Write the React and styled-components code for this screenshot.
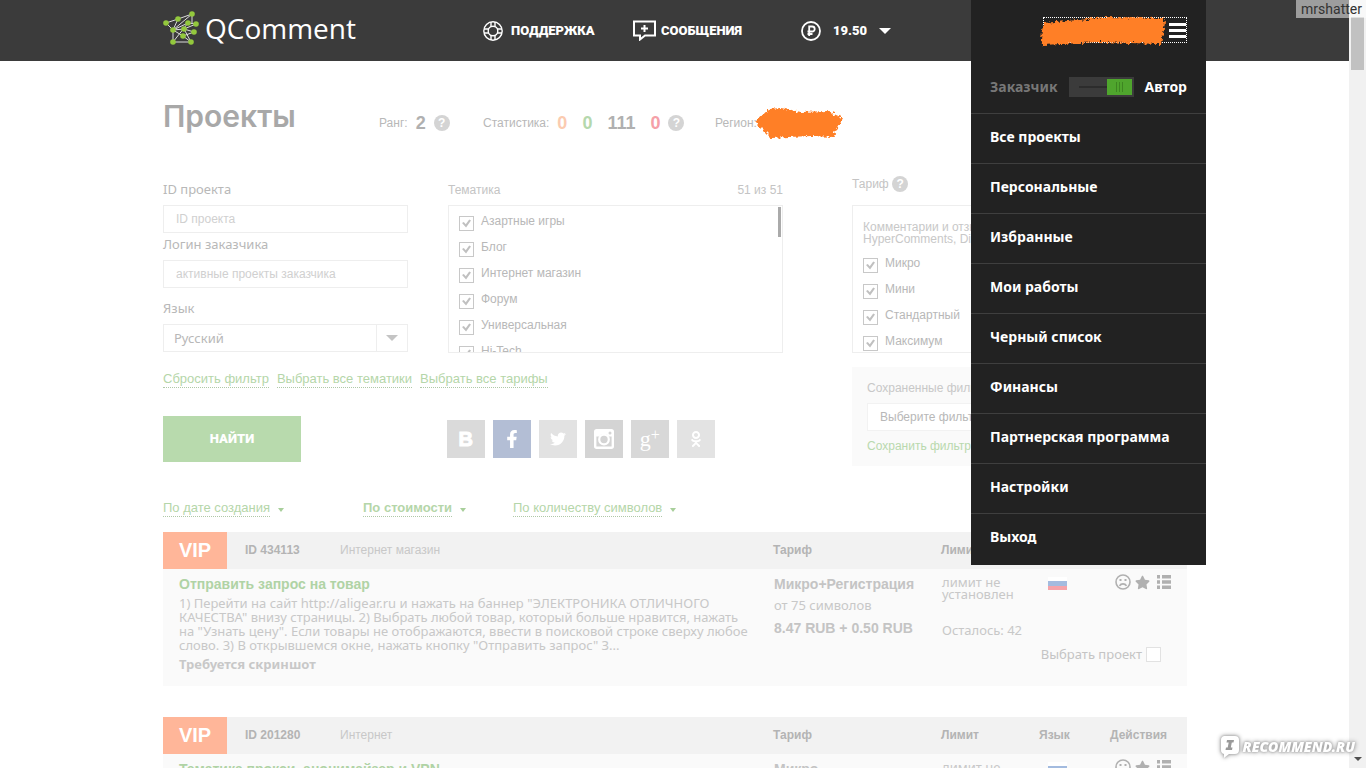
import React from "react";
import styled, { createGlobalStyle } from "styled-components";
import { FaFacebookF, FaTwitter, FaOdnoklassniki, FaStar } from "react-icons/fa";

const THEMES = ["Азартные игры", "Блог", "Интернет магазин", "Форум", "Универсальная", "Hi-Tech"];
const TARIFFS = ["Микро", "Мини", "Стандартный", "Максимум"];

const MENU = [
  "Все проекты",
  "Персональные",
  "Избранные",
  "Мои работы",
  "Черный список",
  "Финансы",
  "Партнерская программа",
  "Настройки",
  "Выход"
];

const PROJECTS = [
  {
    id: "434113",
    category: "Интернет магазин",
    title: "Отправить запрос на товар",
    text:
      '1) Перейти на сайт http://aligear.ru и нажать на баннер "ЭЛЕКТРОНИКА ОТЛИЧНОГО КАЧЕСТВА" внизу страницы. 2) Выбрать любой товар, который больше нравится, нажать на "Узнать цену". Если товары не отображаются, ввести в поисковой строке сверху любое слово. 3) В открывшемся окне, нажать кнопку "Отправить запрос" З...',
    note: "Требуется скриншот",
    tariff: "Микро+Регистрация",
    length: "от 75 символов",
    price: "8.47 RUB + 0.50 RUB",
    left: "Осталось: 42"
  },
  {
    id: "201280",
    category: "Интернет",
    title: "Тематика прокси, анонимайзер и VPN",
    tariff: "Микро"
  }
];

const LogoIcon = () => (
  <svg width="36" height="34" viewBox="0 0 36 34" aria-hidden="true">
    <path
      d="M3 12L15 8L29 3M3 12L10 19L15 8M10 19L29 3V12M10 19L25 12L33 13L21 18L10 19L10 31H28L20 25L31 21L21 18M10 31L25 12M21 18L28 31M10 19L20 25"
      fill="none"
      stroke="#dcdcdc"
      strokeWidth="1"
    />
    <g fill="#93c83d">
      <circle cx="29" cy="3" r="2.800" />
      <circle cx="15" cy="8" r="2.800" />
      <circle cx="3" cy="12" r="2.800" />
      <circle cx="25" cy="12" r="2.800" />
      <circle cx="33" cy="13" r="2.800" />
      <circle cx="21" cy="18" r="2.800" />
      <circle cx="10" cy="19" r="2.800" />
      <circle cx="31" cy="21" r="2.800" />
      <circle cx="20" cy="25" r="2.800" />
      <circle cx="10" cy="31" r="2.800" />
      <circle cx="28" cy="31" r="2.800" />
    </g>
  </svg>
);

const SupportIcon = () => (
  <svg width="20" height="20" viewBox="0 0 20 20" fill="none" stroke="#fff" strokeWidth="1.4" aria-hidden="true">
    <circle cx="10" cy="10" r="9.2" />
    <circle cx="10" cy="10" r="4.8" />
    <path d="M8 1v5M12 1v5M8 14v5M12 14v5M1 8h5M1 12h5M14 8h5M14 12h5" />
  </svg>
);

const MessageIcon = () => (
  <svg width="23" height="21" viewBox="0 0 23 21" fill="none" stroke="#fff" strokeWidth="2" aria-hidden="true">
    <path d="M1 1.5h21v14H12l-5 4v-4H1z" />
    <path d="M11.5 5v7M8 8.500h7" />
  </svg>
);

const RubleIcon = () => (
  <svg width="20" height="20" viewBox="0 0 20 20" fill="none" stroke="#fff" aria-hidden="true">
    <circle cx="10" cy="10" r="9" strokeWidth="1.8" />
    <path d="M8.200 15V5.500h3a2.500 2.500 0 0 1 0 5H6.500M6.500 13h5" strokeWidth="1.8" />
  </svg>
);

const CameraIcon = () => (
  <svg width="20" height="20" viewBox="0 0 20 20" fill="none" stroke="#fff" aria-hidden="true">
    <rect x="1.200" y="1.200" width="17.600" height="17.600" rx="1.500" strokeWidth="2.400" />
    <path d="M1 1h18v6.500h-4.300a5.600 5.600 0 0 0-9.400 0H1z" fill="#fff" stroke="none" />
    <circle cx="10" cy="10.500" r="4.800" strokeWidth="2.200" />
    <circle cx="16" cy="4" r="1.500" fill="#d4d4d4" stroke="none" />
  </svg>
);

const SadIcon = () => (
  <svg width="16" height="16" viewBox="0 0 16 16" fill="none" stroke="#b0b0b0" strokeWidth="1.600" aria-hidden="true">
    <circle cx="8" cy="8" r="7" />
    <path d="M4.500 11.800c1.500-2.600 5.500-2.600 7 0" />
    <path d="M5.500 5v2M10.500 5v2" strokeWidth="2" />
  </svg>
);

const ListIcon = () => (
  <svg width="14" height="14" viewBox="0 0 14 14" fill="#b0b0b0" aria-hidden="true">
    <path d="M0 0h3v3.500H0zM5 0h9v3.500H5zM0 5.200h3v3.500H0zM5 5.200h9v3.500H5zM0 10.500h3v3.500H0zM5 10.500h9v3.500H5z" />
  </svg>
);

const FlagIcon = () => (
  <svg width="19" height="13" viewBox="0 0 19 13" role="img" aria-label="Русский">
    <rect width="19" height="13" fill="#fff" />
    <rect y="4" width="19" height="5" fill="#a3bbdf" />
    <rect y="9" width="19" height="4" fill="#f5a3a9" />
  </svg>
);

const BubbleIcon = () => (
  <svg width="22" height="24" viewBox="0 0 22 24" aria-hidden="true">
    <path d="M5 1h11a4 4 0 0 1 4 4v10a4 4 0 0 1-4 4h-6l-5 4v-4a4 4 0 0 1-3-4V5a4 4 0 0 1 3-4z" fill="#fff" />
    <path d="M8 5h7l-.500 2.500h-1.700l-1 5h1.700l-.5 2.500H6.500L7 12.500h1.700l1-5H7.500z" fill="#999" />
  </svg>
);

const Check = ({ children }) => (
  <CheckRow>
    <Tick type="checkbox" defaultChecked />
    <span>{children}</span>
  </CheckRow>
);

const Project = ({ project }) => (
  <Card>
    <colgroup>
      <Col $w={64} />
      <Col $w={95} />
      <col />
      <Col $w={168} />
      <Col $w={98} />
      <Col $w={71} />
      <Col $w={95} />
    </colgroup>
    <thead>
      <tr>
        <Vip>VIP</Vip>
        <HeadCell>ID {project.id}</HeadCell>
        <Category>{project.category}</Category>
        <HeadCell>Тариф</HeadCell>
        <HeadCell>Лимит</HeadCell>
        <HeadCell>Язык</HeadCell>
        <HeadCell>Действия</HeadCell>
      </tr>
    </thead>
    <tbody>
      <tr>
        <Description colSpan="3" rowSpan="2">
          <ProjectLink href="#project">{project.title}</ProjectLink>
          {project.text && <p>{project.text}</p>}
          {project.note && <strong>{project.note}</strong>}
        </Description>
        <BodyCell rowSpan="2">
          <Strong>{project.tariff}</Strong>
          {project.length && <Muted>{project.length}</Muted>}
          {project.price && <Strong>{project.price}</Strong>}
        </BodyCell>
        <BodyCell rowSpan="2">
          <Limit>лимит не установлен</Limit>
          {project.left && <Muted>{project.left}</Muted>}
        </BodyCell>
        <FlagCell>
          <FlagIcon />
        </FlagCell>
        <BodyCell>
          <Actions>
            <IconButton aria-label="Пожаловаться"><SadIcon /></IconButton>
            <IconButton aria-label="В избранное"><FaStar size={15} /></IconButton>
            <IconButton aria-label="Подробнее"><ListIcon /></IconButton>
          </Actions>
        </BodyCell>
      </tr>
      <tr>
        <PickCell colSpan="2">
          <Pick>
            Выбрать проект
            <Tick type="checkbox" $light />
          </Pick>
        </PickCell>
      </tr>
    </tbody>
  </Card>
);

const UserMenu = () => (
  <Menu>
    <MenuTop>
      <UserButton aria-label="Меню пользователя">
        <Burger><i /><i /><i /></Burger>
        <NameScribble width="128" height="34" viewBox="0 0 128 34" aria-hidden="true">
          <path d="M4 9L40 6L66 3L124 4L126 9L122 30L60 28L4 31L2 25z" fill="#ff7f27" filter="url(#rough)" />
        </NameScribble>
      </UserButton>
    </MenuTop>
    <RoleRow>
      <Role>Заказчик</Role>
      <Switch type="checkbox" aria-label="Автор" defaultChecked />
      <Role $active>Автор</Role>
    </RoleRow>
    {MENU.map(item => (
      <MenuLink href="#menu" key={item}>
        {item}
      </MenuLink>
    ))}
  </Menu>
);

export default function App() {
  return (
    <Screen>
      <GlobalStyle />
      <Page>
        <Header>
          <HeaderInner>
            <Logo href="#home">
              <LogoIcon />
              QComment
            </Logo>
            <Nav>
              <NavLink href="#support" $gap={8}><SupportIcon />ПОДДЕРЖКА</NavLink>
              <NavLink href="#messages" $gap={5}><MessageIcon />СООБЩЕНИЯ</NavLink>
              <Balance><RubleIcon />19.50<Caret $size={6} /></Balance>
            </Nav>
            <UserMenu />
          </HeaderInner>
        </Header>

        <Content>
          <TitleRow>
            <h1>Проекты</h1>
            <Stat>
              Ранг: <Num>2</Num> <Help>?</Help>
            </Stat>
            <Stat>
              Статистика:
              <Counts>
                <Num $color="#fbcbb0">0</Num>
                <Num $color="#b5d8ad">0</Num>
                <Num>111</Num>
                <Num $color="#f5a0a8">0</Num>
              </Counts>
              <Help>?</Help>
            </Stat>
            <Stat>
              Регион:
              <RegionScribble width="92" height="36" viewBox="0 0 92 36" aria-hidden="true">
                <path d="M2 17L16 4L28 3L48 7L74 6L90 13L80 32L58 31L36 32L18 33z" fill="#ff7f27" filter="url(#rough)" />
                <defs>
                  <filter id="rough" x="-10%" y="-10%" width="120%" height="120%">
                    <feTurbulence type="fractalNoise" baseFrequency="0.35" numOctaves="2" seed="4" />
                    <feDisplacementMap in="SourceGraphic" scale="6" xChannelSelector="R" yChannelSelector="G" />
                  </filter>
                </defs>
              </RegionScribble>
            </Stat>
          </TitleRow>

          <Filters>
            <Fields>
              <Field>
                <label htmlFor="pid">ID проекта</label>
                <Input id="pid" placeholder="ID проекта" />
              </Field>
              <Field>
                <label htmlFor="login">Логин заказчика</label>
                <Input id="login" placeholder="активные проекты заказчика" />
              </Field>
              <Field $last>
                <label htmlFor="lang">Язык</label>
                <SelectBox>
                  <select id="lang"><option>Русский</option></select>
                  <Arrow><Caret $size={6} /></Arrow>
                </SelectBox>
              </Field>
            </Fields>
            <Lists>
              <div>
                <ListHead><span>Тематика</span><span>51 из 51</span></ListHead>
                <ListBox>
                  {THEMES.map(t => <Check key={t}>{t}</Check>)}
                  <Thumb />
                </ListBox>
              </div>
              <TariffColumn>
                <ListHead $tight><span>Тариф <Help>?</Help></span></ListHead>
                <ListBox>
                  <Hint>
                    Комментарии и отзывы
                    <br />
                    HyperComments, Disqus
                  </Hint>
                  {TARIFFS.map(t => <Check key={t}>{t}</Check>)}
                </ListBox>
                <Saved>
                  <label htmlFor="saved">Сохраненные фильтры</label>
                  <SavedSelect id="saved"><option>Выберите фильтр</option></SavedSelect>
                  <a href="#save">Сохранить фильтр</a>
                </Saved>
              </TariffColumn>
            </Lists>
          </Filters>

          <LowerFilters>
            <FilterLinks>
              <Dotted href="#reset">Сбросить фильтр</Dotted>
              <Dotted href="#themes">Выбрать все тематики</Dotted>
              <Dotted href="#tariffs">Выбрать все тарифы</Dotted>
            </FilterLinks>
            <SubmitRow>
              <Submit>НАЙТИ</Submit>
              <Socials>
                <Social href="#vk" $bg="#dadada" aria-label="ВКонтакте"><b>B</b></Social>
                <Social href="#fb" $bg="#b3bed5" aria-label="Facebook"><FaFacebookF size={18} /></Social>
                <Social href="#tw" $bg="#e2e2e2" aria-label="Twitter"><FaTwitter size={16} /></Social>
                <Social href="#in" $bg="#d4d4d4" aria-label="Instagram"><CameraIcon /></Social>
                <Social href="#gp" $bg="#d8d8d8" aria-label="Google+"><em>g</em><i>+</i></Social>
                <Social href="#ok" $bg="#e3e3e3" aria-label="Одноклассники"><FaOdnoklassniki size={16} /></Social>
              </Socials>
            </SubmitRow>
          </LowerFilters>

          <SortRow>
            <Sort><Dotted href="#date">По дате создания</Dotted><SortCaret $size={3} /></Sort>
            <Sort $active><Dotted href="#cost">По стоимости</Dotted><SortCaret $size={3} /></Sort>
            <Sort><Dotted href="#length">По количеству символов</Dotted><SortCaret $size={3} /></Sort>
          </SortRow>

          {PROJECTS.map(p => <Project project={p} key={p.id} />)}
        </Content>
      </Page>
      <ScrollTrack>
        <ScrollThumb />
        <Caret $size={4} />
      </ScrollTrack>
      <UserTag>mrshatter</UserTag>
      <Watermark><BubbleIcon />RECOMMEND.RU</Watermark>
    </Screen>
  );
}

const GlobalStyle = createGlobalStyle`
  * {
    box-sizing: border-box;
  }
  body, h1, p {
    margin: 0;
  }
  body {
    background: #fff;
    color: #b8b8b8;
    font: 12px/16px "Liberation Sans", Arial, sans-serif;
  }
  a {
    text-decoration: none;
  }
  button, input, select {
    font: inherit;
    color: inherit;
  }
`;

const tahoma = `font: 13px/16px "Noto Sans", Tahoma, sans-serif;`;

const Screen = styled.div`
  position: relative;
  display: flex;
  height: 100vh;
  overflow: hidden;
`;

const Page = styled.div`
  flex: 1;
  min-width: 0;
`;

const Header = styled.header`
  background: #3b3b3b;
  height: 61px;
`;

const HeaderInner = styled.div`
  position: relative;
  display: flex;
  align-items: center;
  max-width: 1025px;
  height: 100%;
  margin: 0 auto;
  padding-left: 1px;
`;

const Logo = styled.a`
  display: flex;
  align-items: center;
  gap: 6px;
  width: 320px;
  padding-bottom: 6px;
  color: #fff;
  font: 28px/34px "Open Sans", sans-serif;
`;

const Nav = styled.nav`
  display: flex;
  color: #fff;
  font: 900 13px/20px Roboto, sans-serif;
`;

const NavLink = styled.a`
  display: flex;
  align-items: center;
  gap: ${p => p.$gap}px;
  width: 150px;
  color: #fff;
`;

const Balance = styled.div`
  display: flex;
  align-items: center;
  gap: 12px;
  padding-left: 18px;
`;

const Caret = styled.span`
  display: inline-block;
  border: ${p => p.$size}px solid transparent;
  border-top-color: currentColor;
  border-bottom: 0;
`;

const SortCaret = styled(Caret)`
  border-top-width: 4px;
  margin-top: 2px;
`;

const Menu = styled.div`
  position: absolute;
  z-index: 2;
  top: 0;
  right: -19px;
  width: 235px;
  height: 565px;
  background: #222;
  color: #fff;
  font: bold 14px/20px "Noto Sans", sans-serif;
`;

const MenuTop = styled.div`
  display: flex;
  justify-content: flex-end;
  padding: 17px 19px 0 0;
`;

const UserButton = styled.button`
  position: relative;
  display: flex;
  align-items: center;
  justify-content: flex-end;
  width: 144px;
  height: 26px;
  padding: 0;
  border: 1px dotted #fff;
  background: none;
`;

const NameScribble = styled.svg`
  position: absolute;
  top: -4px;
  left: -5px;
`;

const RegionScribble = styled.svg`
  flex: none;
  margin: -10px 0 -10px -12px;
`;

const Burger = styled.span`
  display: grid;
  gap: 3px;
  width: 17px;

  i {
    height: 3px;
    background: #fff;
  }
`;

const RoleRow = styled.div`
  display: flex;
  align-items: center;
  justify-content: space-between;
  height: 70px;
  padding: 18px 19px 0;
`;

const Role = styled.span`
  color: ${p => (p.$active ? "#fff" : "#777")};
`;

const Switch = styled.input`
  appearance: none;
  display: flex;
  align-items: center;
  justify-content: flex-end;
  width: 65px;
  height: 20px;
  margin: 0;
  padding: 2px;
  border: 0;
  background: #3b3b3b;

  &::before {
    content: "";
    width: 28px;
    height: 2px;
    background: #2c2c2c;
  }

  &::after {
    content: "";
    width: 25px;
    height: 16px;
    background: linear-gradient(90deg, transparent 9px, #3d8521 9px 10px, transparent 10px 12px, #3d8521 12px 13px, transparent 13px 15px, #3d8521 15px 16px, transparent 16px) center / 25px 10px no-repeat #4fa52d;
  }
`;

const MenuLink = styled.a`
  display: flex;
  align-items: center;
  height: 50px;
  padding: 0 19px 4px;
  border-top: 1px solid #3f3f3f;
  color: #fff;
`;

const Content = styled.main`
  max-width: 1025px;
  margin: 0 auto;
  padding-left: 1px;
`;

const TitleRow = styled.div`
  display: grid;
  grid-template-columns: 216px 104px 232px 1fr;
  align-items: end;
  padding-top: 35px;

  h1 {
    color: #a8a8a8;
    font: 600 30px/40px Inter, sans-serif;
  }
`;

const Stat = styled.div`
  display: flex;
  align-items: center;
  gap: 8px;
  height: 16px;
  margin-bottom: 5px;
  white-space: nowrap;
`;

const Counts = styled.span`
  display: flex;
  gap: 15px;
`;

const Num = styled.b`
  color: ${p => p.$color || "#b0b0b0"};
  font-size: 18px;
`;

const Help = styled.span`
  display: inline-block;
  width: 16px;
  height: 16px;
  border-radius: 50%;
  background: #d4d4d4;
  color: #fff;
  font-weight: bold;
  text-align: center;
`;

const Filters = styled.div`
  display: flex;
  gap: 40px;
  padding-top: 46px;
`;

const Fields = styled.div`
  width: 245px;
`;

const Field = styled.div`
  ${tahoma}
  margin-bottom: ${p => (p.$last ? 0 : 4)}px;
  padding-top: ${p => (p.$last ? 9 : 0)}px;

  label {
    display: block;
    margin-bottom: 9px;
    line-height: 14px;
  }
`;

const Input = styled.input`
  display: block;
  width: 100%;
  height: 28px;
  padding: 0 12px;
  border: 1px solid #eee;
  font: 12px/16px "Liberation Sans", Arial, sans-serif;

  &::placeholder {
    color: #d0d0d0;
  }
`;

const SelectBox = styled.div`
  display: flex;
  height: 28px;
  border: 1px solid #eee;

  select {
    flex: 1;
    appearance: none;
    padding: 0 10px;
    border: 0;
    background: #fff;
  }
`;

const Arrow = styled.span`
  display: flex;
  align-items: center;
  justify-content: center;
  width: 31px;
  border-left: 1px solid #eee;
  color: #c4c4c4;
`;

const Lists = styled.div`
  flex: 1;
  display: grid;
  grid-template-columns: 1fr 1fr;
  gap: 69px;
`;

const ListHead = styled.div`
  display: flex;
  justify-content: space-between;
  height: 23px;
  margin-top: ${p => (p.$tight ? -6 : 0)}px;
  margin-bottom: ${p => (p.$tight ? 6 : 0)}px;
  color: #c4c4c4;
`;

const ListBox = styled.div`
  position: relative;
  height: 148px;
  padding: 7px 10px;
  overflow: hidden;
  border: 1px solid #eee;
`;

const Thumb = styled.span`
  position: absolute;
  top: 1px;
  right: 1px;
  width: 3px;
  height: 30px;
  background: #aaa;
`;

const Hint = styled.p`
  margin: 8px 0 10px;
  color: #c8c8c8;
  line-height: 12px;
  white-space: nowrap;
`;

const CheckRow = styled.label`
  display: flex;
  gap: 7px;
  height: 26px;

  input {
    margin-top: 3px;
  }
`;

const Tick = styled.input`
  appearance: none;
  flex: none;
  width: 15px;
  height: 15px;
  margin: 0;
  border: 1px solid ${p => (p.$light ? "#e2e2e2" : "#c8c8c8")};
  background: #fff;

  &:checked::after {
    content: "";
    display: block;
    width: 9px;
    height: 9px;
    margin: 2px;
    background: #c0c0c0;
    clip-path: polygon(0 45%, 20% 32%, 42% 58%, 80% 5%, 100% 18%, 45% 95%);
  }
`;

const TariffColumn = styled.div`
  height: 171px;
`;

const Saved = styled.div`
  display: flex;
  flex-direction: column;
  gap: 7px;
  height: 99px;
  margin-top: 14px;
  padding: 13px 15px;
  background: #fafafa;
  color: #c8c8c8;

  a {
    color: #b9d9ae;
  }
`;

const SavedSelect = styled.select`
  appearance: none;
  flex: none;
  height: 28px;
  padding: 0 12px;
  border: 1px solid #f2f2f2;
  background: #fff;
  color: #b8b8b8;
`;

const LowerFilters = styled.div`
  width: 66%;
  padding-top: 18px;
`;

const FilterLinks = styled.div`
  display: flex;
  gap: 8px;
  font-size: 13px;
`;

const Dotted = styled.a`
  border-bottom: 1px dotted #b0c8a8;
  color: #b5d6a9;
`;

const SubmitRow = styled.div`
  display: flex;
  align-items: center;
  justify-content: space-between;
  margin-top: 28px;
  padding-right: 124px;
`;

const Submit = styled.button`
  width: 138px;
  height: 46px;
  border: 0;
  background: #b8daad;
  color: #fff;
  font: 900 13px/16px Roboto, sans-serif;
`;

const Socials = styled.div`
  display: flex;
  gap: 8px;
`;

const Social = styled.a`
  display: flex;
  align-items: center;
  justify-content: center;
  width: 38px;
  height: 38px;
  background: ${p => p.$bg};
  color: #fff;

  b {
    font-size: 20px;
    -webkit-text-stroke: 1px #fff;
  }
  em {
    font: 22px/22px "Liberation Serif", serif;
  }
  i {
    padding-bottom: 8px;
    font: 16px/16px "Liberation Serif", serif;
  }
`;

const SortRow = styled.div`
  display: grid;
  grid-template-columns: 200px 150px 1fr;
  margin: 38px 0 15px;
  font-size: 13px;
`;

const Sort = styled.span`
  display: flex;
  align-items: center;
  gap: 8px;
  color: #a8cf9b;
  font-weight: ${p => (p.$active ? "bold" : "normal")};
`;

const Card = styled.table`
  width: 100%;
  margin-bottom: 31px;
  table-layout: fixed;
  border-collapse: collapse;
  background: #fafafa;

  td {
    padding: 0;
    vertical-align: top;
  }
`;

const Col = styled.col`
  width: ${p => p.$w}px;
`;

const HeadCell = styled.th`
  height: 37px;
  padding: 0 0 2px 18px;
  background: #f2f2f2;
  color: #b4b4b4;
  text-align: left;
  white-space: nowrap;
`;

const Category = styled(HeadCell)`
  color: #c8c8c8;
  font-weight: normal;
`;

const Vip = styled(HeadCell)`
  padding: 0 0 2px;
  background: #ffb699;
  color: #fff;
  font-size: 20px;
  text-align: center;
`;

const Description = styled.td`
  height: 117px;

  && {
    ${tahoma}
    line-height: 14px;
    padding: 7px 0 0 16px;
    color: #c8c8c8;
  }
  p {
    margin: 4px 0 5px;
  }
`;

const ProjectLink = styled.a`
  display: block;
  color: #b0d3a5;
  font: bold 14px/16px "Liberation Sans", Arial, sans-serif;
`;

const BodyCell = styled.td`
  && {
    padding: 7px 0 0 19px;
  }
`;

const Strong = styled.strong`
  display: block;
  color: #c4c4c4;
  font-size: 14px;
`;

const Muted = styled.div`
  ${tahoma}
  margin: 5px 0 7px;
  color: #c8c8c8;
  white-space: nowrap;
`;

const Limit = styled.div`
  ${tahoma}
  line-height: 12px;
  margin-bottom: 22px;
  color: #c8c8c8;
`;

const FlagCell = styled.td`
  && {
    padding: 8px 0 0 27px;
  }
`;

const Actions = styled.div`
  display: flex;
  align-items: center;
  gap: 4px;
  margin: -2px 0 0 4px;
`;

const IconButton = styled.button`
  display: flex;
  padding: 0;
  border: 0;
  background: none;
  color: #b0b0b0;

  &:last-child {
    padding-left: 3px;
  }
`;

const PickCell = styled.td`
  && {
    padding: 0 26px 24px 0;
    vertical-align: bottom;
  }
`;

const Pick = styled.label`
  ${tahoma}
  display: flex;
  align-items: center;
  justify-content: flex-end;
  gap: 4px;
  white-space: nowrap;
  color: #c4c4c4;
`;

const ScrollTrack = styled.div`
  display: flex;
  flex-direction: column;
  align-items: center;
  justify-content: space-between;
  width: 17px;
  padding: 17px 0 7px;
  background: #f1f1f1;
  color: #505050;
`;

const ScrollThumb = styled.div`
  width: 13px;
  height: 53px;
  background: #c1c1c1;
`;

const UserTag = styled.div`
  position: absolute;
  z-index: 3;
  top: 0;
  right: 0;
  padding: 1px 4px 1px 5px;
  background: rgba(255, 255, 255, 0.5);
  color: #333;
  font: 14px/16px Roboto, sans-serif;
`;

const Watermark = styled.div`
  position: absolute;
  z-index: 3;
  right: 11px;
  bottom: 9px;
  display: flex;
  align-items: center;
  gap: 2px;
  color: #fff;
  font: italic 900 14px/24px "Noto Sans", sans-serif;
  filter: drop-shadow(0 0 1px #aaa) drop-shadow(0 0 2px #999);
`;
